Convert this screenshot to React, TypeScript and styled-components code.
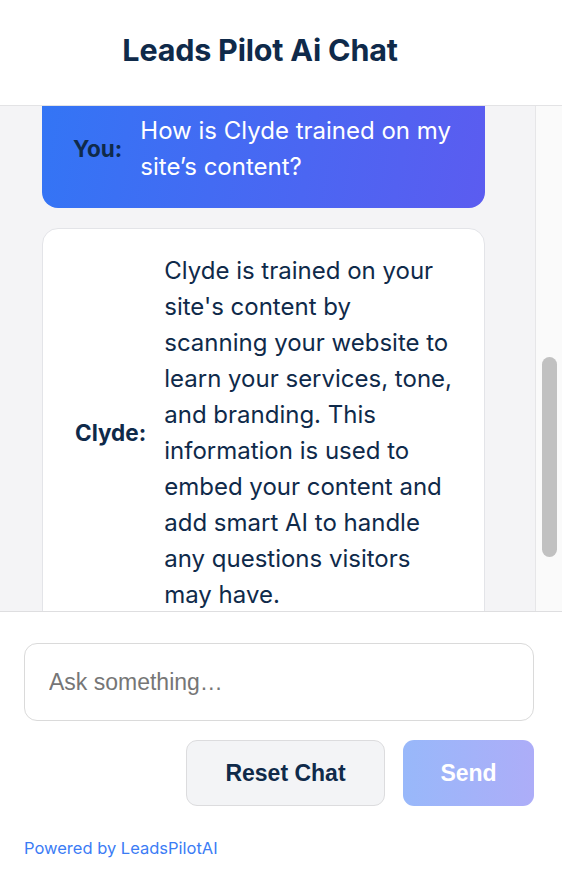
import React, { useLayoutEffect, useRef, useState } from "react";
import styled, { createGlobalStyle } from "styled-components";

const GlobalStyle = createGlobalStyle`
  * { box-sizing: border-box; }
  html, body { margin: 0; padding: 0; background: #ffffff; }
  body { font-family: Inter, "Noto Sans", "Liberation Sans", sans-serif; }
`;

const NAVY = "#0f2a4a";

const Card = styled.div`
  width: 562px;
  height: 886px;
  display: flex;
  flex-direction: column;
  background: #ffffff;
  overflow: hidden;
`;

const Header = styled.header`
  height: 106px;
  flex: 0 0 106px;
  display: flex;
  align-items: center;
  justify-content: center;
  border-bottom: 1px solid #e3e3e5;
  padding: 0 42px 6px 0;
`;

const Title = styled.h1`
  margin: 0;
  font-size: 30.5px;
  font-weight: 700;
  color: ${NAVY};
  letter-spacing: -0.2px;
`;

const MessagePane = styled.div`
  flex: 1 1 auto;
  min-height: 0;
  display: flex;
  background: #f4f4f6;
`;

const Messages = styled.div`
  flex: 1 1 auto;
  overflow-y: scroll;
  scrollbar-width: none;
  display: flex;
  flex-direction: column;
  gap: 20px;
  padding: 20px 50px 110px 42px;
  &::-webkit-scrollbar {
    display: none;
  }
`;

const ScrollTrack = styled.div`
  flex: 0 0 27px;
  position: relative;
  background: #fafafa;
  border-left: 1px solid #e6e6e8;
`;

const ScrollThumb = styled.div`
  position: absolute;
  left: 6px;
  width: 15px;
  border-radius: 8px;
  background: #c1c1c1;
`;

const Bubble = styled.div<{ $user?: boolean }>`
  flex: 0 0 auto;
  display: flex;
  align-items: center;
  gap: 18px;
  padding: ${(p) => (p.$user ? "23px 30px 23px 31px" : "24px 30px 24px 32px")};
  border-radius: 16px;
  font-size: 24px;
  line-height: 36px;
  background: ${(p) =>
    p.$user ? "linear-gradient(100deg, #3375f5 0%, #5b5cf0 100%)" : "#ffffff"};
  border: ${(p) => (p.$user ? "none" : "1px solid #e3e4e8")};
  color: ${(p) => (p.$user ? "#ffffff" : NAVY)};
`;

const Speaker = styled.span`
  flex: 0 0 auto;
  font-size: 22.5px;
  font-weight: 700;
  color: ${NAVY};
`;

const Text = styled.span`
  flex: 1 1 auto;
`;

const Footer = styled.div`
  flex: 0 0 275px;
  border-top: 1px solid #dedee0;
  padding: 31px 28px 0 24px;
  display: flex;
  flex-direction: column;
`;

const Input = styled.input`
  height: 78px;
  width: 100%;
  border: 1px solid #dadada;
  border-radius: 13px;
  padding: 0 24px;
  font-family: "Liberation Sans", Arial, sans-serif;
  font-size: 23px;
  color: ${NAVY};
  outline: none;
  &::placeholder {
    color: #767676;
  }
`;

const Actions = styled.div`
  display: flex;
  justify-content: flex-end;
  gap: 18px;
  margin-top: 19px;
`;

const Button = styled.button<{ $primary?: boolean }>`
  height: 66px;
  width: ${(p) => (p.$primary ? "131px" : "199px")};
  border-radius: 11px;
  font-family: "Liberation Sans", Arial, sans-serif;
  font-size: 23px;
  font-weight: 700;
  cursor: pointer;
  border: ${(p) => (p.$primary ? "none" : "1px solid #dcdcde")};
  background: ${(p) =>
    p.$primary ? "linear-gradient(90deg, #98b8fa 0%, #adadf8 100%)" : "#f3f4f6"};
  color: ${(p) => (p.$primary ? "#ffffff" : NAVY)};
`;

const Powered = styled.a`
  margin-top: 32px;
  font-size: 16.5px;
  color: #3b7cf5;
  text-decoration: none;
`;

type Msg = { from: "You" | "Clyde"; text: string };

const messages: Msg[] = [
  { from: "Clyde", text: "Hi! I'm Clyde. Ask me anything about your site." },
  { from: "You", text: "Hi Clyde!" },
  { from: "You", text: "What does Clyde do?" },
  {
    from: "Clyde",
    text:
      "Clyde answers visitor questions on your website, captures leads and helps them find what they need.",
  },
  { from: "You", text: "How is Clyde trained on my site’s content?" },
  {
    from: "Clyde",
    text:
      "Clyde is trained on your site's content by scanning your website to learn your services, tone, and branding. This information is used to embed your content and add smart AI to handle any questions visitors may have.",
  },
];

export default function App() {
  const listRef = useRef<HTMLDivElement>(null);
  const targetRef = useRef<HTMLDivElement>(null);
  const [thumb, setThumb] = useState({ top: 0, height: 0 });

  const updateThumb = () => {
    const list = listRef.current;
    if (!list) return;
    const ratio = list.clientHeight / list.scrollHeight;
    setThumb({
      top: list.scrollTop * ratio,
      height: list.clientHeight * ratio,
    });
  };

  useLayoutEffect(() => {
    const list = listRef.current;
    const target = targetRef.current;
    if (list && target) {
      const offset =
        target.getBoundingClientRect().top - list.getBoundingClientRect().top + list.scrollTop;
      list.scrollTop = offset + 16;
    }
    updateThumb();
  }, []);

  return (
    <>
      <GlobalStyle />
      <Card>
        <Header>
          <Title>Leads Pilot Ai Chat</Title>
        </Header>
        <MessagePane>
          <Messages ref={listRef} onScroll={updateThumb}>
            {messages.map((m, i) => (
              <Bubble
                key={i}
                $user={m.from === "You"}
                ref={i === messages.length - 2 ? targetRef : undefined}
              >
                <Speaker>{m.from}:</Speaker>
                <Text>{m.text}</Text>
              </Bubble>
            ))}
          </Messages>
          <ScrollTrack>
            <ScrollThumb style={{ top: thumb.top, height: thumb.height }} />
          </ScrollTrack>
        </MessagePane>
        <Footer>
          <Input placeholder="Ask something…" />
          <Actions>
            <Button>Reset Chat</Button>
            <Button $primary>Send</Button>
          </Actions>
          <Powered href="#">Powered by LeadsPilotAI</Powered>
        </Footer>
      </Card>
    </>
  );
}
